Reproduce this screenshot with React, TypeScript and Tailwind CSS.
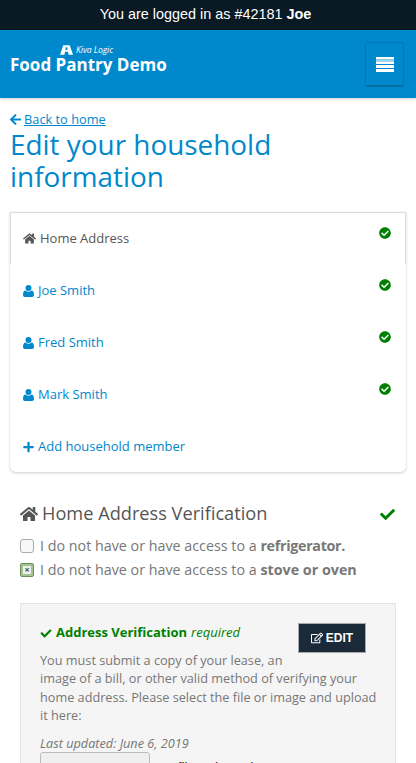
import { FaArrowLeft, FaCheck, FaCheckCircle, FaHome, FaPlus, FaRegEdit } from "react-icons/fa";

const MEMBERS = ["Joe Smith", "Fred Smith", "Mark Smith"];

function UserIcon() {
  return (
    <svg viewBox="0 0 11 12" className="mr-[4px] h-[12px] w-[11px]" fill="currentColor">
      <circle cx="5.5" cy="3" r="3" />
      <path d="M0 10c0-3 1-4.500 2.500-4.500C3.500 6.300 4.400 6.700 5.500 6.700S7.500 6.300 8.500 5.500C10 5.500 11 7 11 10c0 1.300-.8 2-2 2H2c-1.200 0-2-.7-2-2z" />
    </svg>
  );
}

function NavRow({ name }: { name: string }) {
  return (
    <div className="relative flex h-[52px] items-center pl-[13px] pt-[2px] text-[13px] text-[#0088cc]">
      <UserIcon />
      <span>{name}</span>
      <FaCheckCircle className="absolute right-[15px] top-[15px] h-[12px] w-[12px] text-[#008000]" />
    </div>
  );
}

export default function App() {
  return (
    <div className="h-[763px] w-[416px] overflow-hidden bg-white font-['Open_Sans',sans-serif] text-[#666]">
      <div className="flex h-[30px] items-center justify-center bg-[#0a1a24] pr-[5px] font-['Liberation_Sans',sans-serif] text-[14.4px] text-white">
        <span>
          You are logged in as #42181 <b>Joe</b>
        </span>
      </div>

      <header className="flex h-[68px] items-start justify-between bg-[#0088cc] pl-[10px] pr-[12px] shadow-[0_1px_3px_rgba(0,0,0,0.2)]">
        <div className="pt-[15px] text-white">
          <div className="flex h-[10px] items-center pl-[50px]">
            <svg viewBox="0 0 14 10" className="mr-[3px] h-[10px] w-[13px]" fill="currentColor">
              <path d="M3.500 0h7L14 10H9.200L8.600 7H5.400L4.800 10H0zM6 2v3h2V2z" />
            </svg>
            <span className="text-[8.5px] italic leading-none">Kiva Logic</span>
          </div>
          <div className="text-[17px] font-bold leading-[20px]">Food Pantry Demo</div>
        </div>
        <button className="mt-[12px] flex h-[44px] w-[39px] items-center justify-center rounded-[2px] border border-[#0077b3] border-b-[#006a9f] shadow-[0_1px_1px_rgba(0,0,0,0.15)]">
          <svg viewBox="0 0 18 15" className="h-[15px] w-[18px]">
            <rect width="18" height="2.300" fill="#fff" />
            <rect y="2.300" width="18" height="2.300" fill="#9fd6f0" />
            <rect y="4.600" width="18" height="2.400" fill="#fff" />
            <rect y="8" width="18" height="3" fill="#fff" />
            <rect y="12" width="18" height="3" fill="#fff" />
          </svg>
        </button>
      </header>

      <main className="px-[10px] pt-[12px]">
        <a className="flex h-[18px] items-center text-[12.8px] leading-[18px] text-[#0088cc] underline">
          <FaArrowLeft className="mr-[3px] h-[13px] w-[11px]" />
          Back to home
        </a>
        <h1 className="text-[27.9px] font-normal leading-[32px] text-[#0088cc]">Edit your household information</h1>

        <nav className="mt-[20px] rounded-b-[6px] shadow-[0_1px_3px_rgba(0,0,0,0.2)]">
          <div className="relative flex h-[52px] items-center border-x border-t border-[#ddd] pl-[12px] text-[13px] text-[#555]">
            <FaHome className="mr-[4px] h-[13px] w-[13px]" />
            <span>Home Address</span>
            <FaCheckCircle className="absolute right-[14px] top-[14px] h-[12px] w-[12px] text-[#008000]" />
          </div>
          {MEMBERS.map((name) => (
            <NavRow key={name} name={name} />
          ))}
          <div className="flex h-[52px] items-center pl-[13px] pt-[2px] text-[13px] text-[#0088cc]">
            <FaPlus className="mr-[4px] h-[12px] w-[11px]" />
            <span>Add household member</span>
          </div>
        </nav>

        <section className="px-[10px] pt-[30px]">
          <div className="flex h-[24px] items-center justify-between">
            <h2 className="flex items-center text-[18.2px] font-normal text-[#555]">
              <FaHome className="mr-[4px] h-[18px] w-[18px]" />
              Home Address Verification
            </h2>
            <FaCheck className="h-[15px] w-[17px] text-[#008000]" />
          </div>

          <div className="mt-[7px] flex h-[25px] items-center text-[14.3px] text-[#777]">
            <span className="mr-[6px] h-[14px] w-[14px] rounded-[3px] border border-[#aaa] bg-[#f8f8f8]" />
            <span>
              I do not have or have access to a <b className="tracking-[-0.3px]">refrigerator.</b>
            </span>
          </div>
          <div className="flex h-[23px] items-center text-[14.3px] text-[#777]">
            <span className="mr-[6px] flex h-[14px] w-[14px] items-center justify-center rounded-[2px] border border-[#6d8f5c] bg-[#a3c293]">
              <span className="flex h-[8px] w-[8px] items-center justify-center bg-[#eef3ea] text-[9px] font-bold leading-none text-[#444]">×</span>
            </span>
            <span>
              I do not have or have access to a <b>stove or oven</b>
            </span>
          </div>

          <div className="mt-[22px] border border-[#e3e3e3] bg-[#f5f5f5] pl-[19px] pr-[14px] pt-[19px]">
            <div className="relative">
              <div className="flex h-[20px] items-center text-[13px] text-[#008000]">
                <FaCheck className="mr-[4px] h-[11px] w-[12px]" />
                <b>Address Verification</b>
                <i className="ml-[4px]">required</i>
              </div>
              <button className="absolute right-[15px] top-0 flex h-[30px] w-[68px] items-center justify-center border border-[#aaa] bg-[#1a2a38] font-['Liberation_Sans',sans-serif] text-[12px] font-bold text-white">
                <FaRegEdit className="mr-[3px] h-[12px] w-[12px]" />
                EDIT
              </button>
              <p className="mt-[8px] text-[12.7px] leading-[18.3px] text-[#777]">
                You must submit a copy of your lease, an
                <br />
                image of a bill, or other valid method of verifying your home address. Please select the file or image and upload it here:
              </p>
              <p className="mt-[10px] text-[12.7px] italic leading-[18px] text-[#777]">Last updated: June 6, 2019</p>
              <div className="flex items-start">
                <span className="h-[30px] w-[110px] rounded-[3px] border border-[#bbb] bg-[#efefef]" />
                <span className="ml-[5px] pt-[6px] font-['Liberation_Sans',sans-serif] text-[14.4px] text-[#333]">No file selected.</span>
              </div>
            </div>
          </div>
        </section>
      </main>
    </div>
  );
}
